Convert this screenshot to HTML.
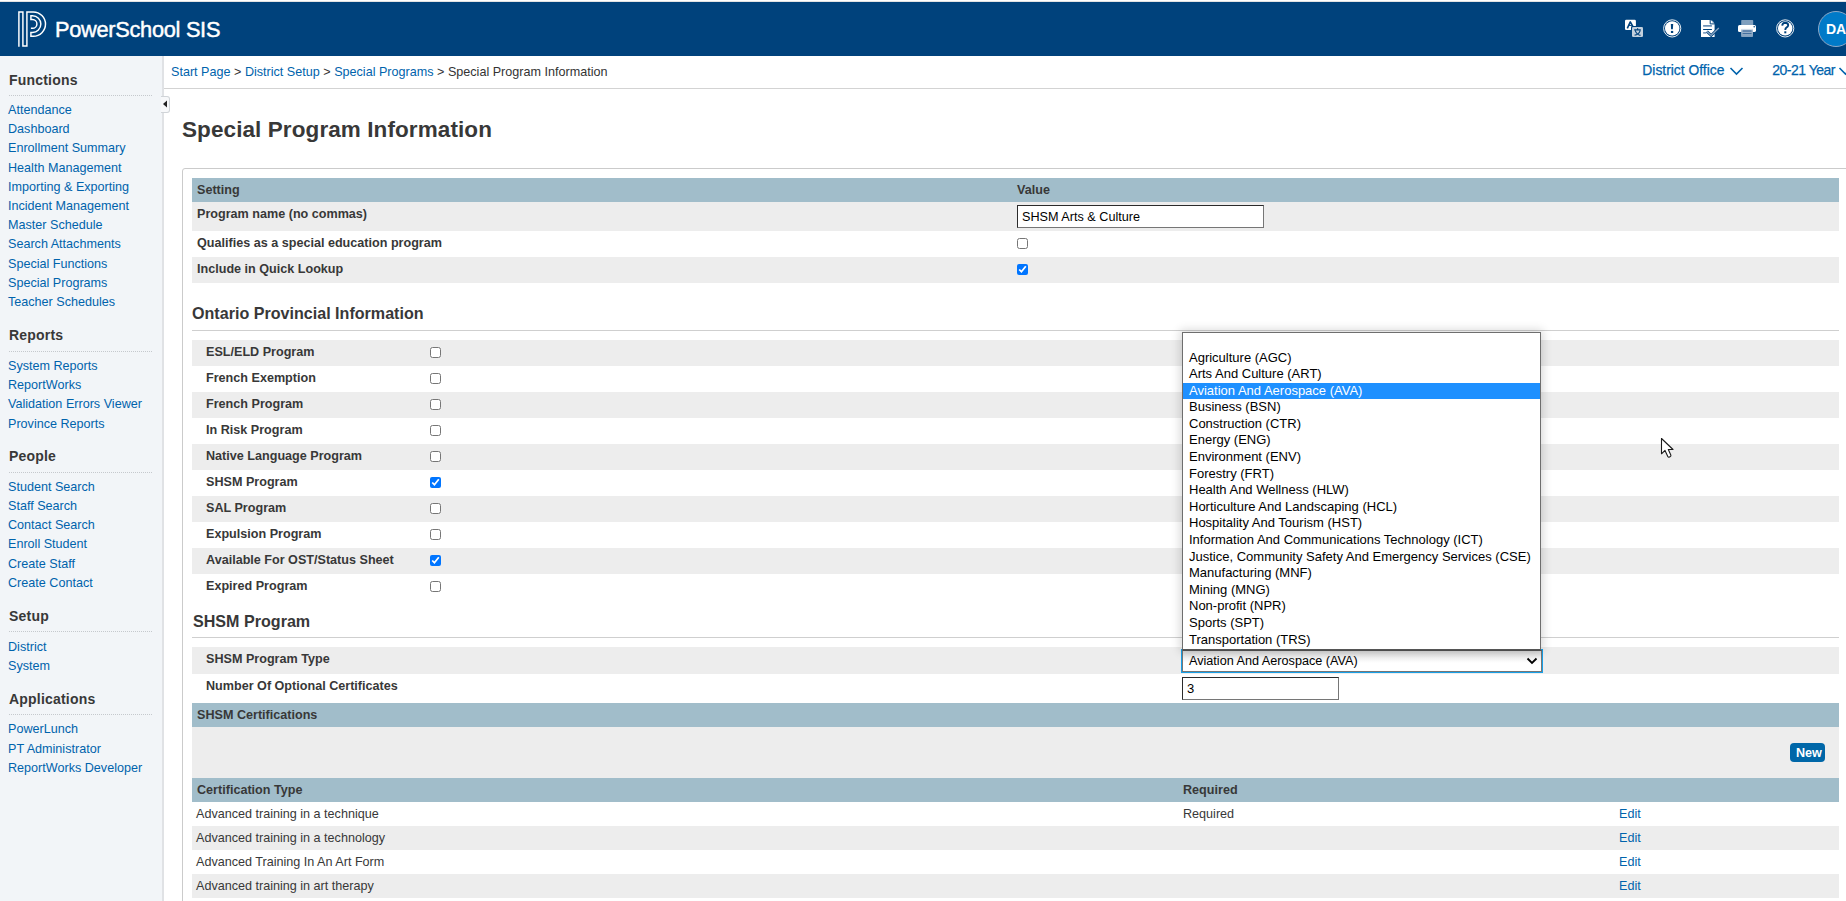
<!DOCTYPE html>
<html><head><meta charset="utf-8">
<style>
*{box-sizing:border-box;margin:0;padding:0}
html,body{width:1846px;height:901px;overflow:hidden;background:#fff;font-family:"Liberation Sans",sans-serif;color:#333}
.a{position:absolute}
.t{position:absolute;white-space:nowrap;line-height:20px}
input[type=checkbox]{position:absolute;width:11px;height:11px;margin:0}
</style></head><body>
<div class="a" style="left:0px;top:0px;width:1846px;height:1px;background:#fff"></div>
<div class="a" style="left:0px;top:1px;width:1846px;height:1px;background:#e2e2e2"></div>
<div class="a" style="left:0px;top:2px;width:1846px;height:54px;background:#00427c"></div>
<div class="t" style="left:55px;top:20px;font-size:21.8px;color:#fff;letter-spacing:-0.3px;-webkit-text-stroke:0.45px #fff">PowerSchool SIS</div>
<div class="a" style="left:0px;top:56px;width:162px;height:845px;background:#f2f5f8"></div>
<div class="a" style="left:162px;top:56px;width:2px;height:845px;background:#e0e2e5"></div>
<div class="t" style="left:9px;top:70px;font-size:14px;font-weight:bold;color:#383838;letter-spacing:0.2px">Functions</div>
<div class="a" style="left:9px;top:95px;width:144px;height:1px;background-image:linear-gradient(to right,#c5c9cd 50%,transparent 50%);background-size:2px 1px"></div>
<div class="t" style="left:8px;top:100px;font-size:12.6px;color:#0063ac;">Attendance</div>
<div class="t" style="left:8px;top:119px;font-size:12.6px;color:#0063ac;">Dashboard</div>
<div class="t" style="left:8px;top:138px;font-size:12.6px;color:#0063ac;">Enrollment Summary</div>
<div class="t" style="left:8px;top:158px;font-size:12.6px;color:#0063ac;">Health Management</div>
<div class="t" style="left:8px;top:177px;font-size:12.6px;color:#0063ac;">Importing &amp; Exporting</div>
<div class="t" style="left:8px;top:196px;font-size:12.6px;color:#0063ac;">Incident Management</div>
<div class="t" style="left:8px;top:215px;font-size:12.6px;color:#0063ac;">Master Schedule</div>
<div class="t" style="left:8px;top:234px;font-size:12.6px;color:#0063ac;">Search Attachments</div>
<div class="t" style="left:8px;top:254px;font-size:12.6px;color:#0063ac;">Special Functions</div>
<div class="t" style="left:8px;top:273px;font-size:12.6px;color:#0063ac;">Special Programs</div>
<div class="t" style="left:8px;top:292px;font-size:12.6px;color:#0063ac;">Teacher Schedules</div>
<div class="t" style="left:9px;top:325px;font-size:14px;font-weight:bold;color:#383838;letter-spacing:0.2px">Reports</div>
<div class="a" style="left:9px;top:351px;width:144px;height:1px;background-image:linear-gradient(to right,#c5c9cd 50%,transparent 50%);background-size:2px 1px"></div>
<div class="t" style="left:8px;top:356px;font-size:12.6px;color:#0063ac;">System Reports</div>
<div class="t" style="left:8px;top:375px;font-size:12.6px;color:#0063ac;">ReportWorks</div>
<div class="t" style="left:8px;top:394px;font-size:12.6px;color:#0063ac;">Validation Errors Viewer</div>
<div class="t" style="left:8px;top:414px;font-size:12.6px;color:#0063ac;">Province Reports</div>
<div class="t" style="left:9px;top:446px;font-size:14px;font-weight:bold;color:#383838;letter-spacing:0.2px">People</div>
<div class="a" style="left:9px;top:472px;width:144px;height:1px;background-image:linear-gradient(to right,#c5c9cd 50%,transparent 50%);background-size:2px 1px"></div>
<div class="t" style="left:8px;top:477px;font-size:12.6px;color:#0063ac;">Student Search</div>
<div class="t" style="left:8px;top:496px;font-size:12.6px;color:#0063ac;">Staff Search</div>
<div class="t" style="left:8px;top:515px;font-size:12.6px;color:#0063ac;">Contact Search</div>
<div class="t" style="left:8px;top:534px;font-size:12.6px;color:#0063ac;">Enroll Student</div>
<div class="t" style="left:8px;top:554px;font-size:12.6px;color:#0063ac;">Create Staff</div>
<div class="t" style="left:8px;top:573px;font-size:12.6px;color:#0063ac;">Create Contact</div>
<div class="t" style="left:9px;top:606px;font-size:14px;font-weight:bold;color:#383838;letter-spacing:0.2px">Setup</div>
<div class="a" style="left:9px;top:631px;width:144px;height:1px;background-image:linear-gradient(to right,#c5c9cd 50%,transparent 50%);background-size:2px 1px"></div>
<div class="t" style="left:8px;top:637px;font-size:12.6px;color:#0063ac;">District</div>
<div class="t" style="left:8px;top:656px;font-size:12.6px;color:#0063ac;">System</div>
<div class="t" style="left:9px;top:689px;font-size:14px;font-weight:bold;color:#383838;letter-spacing:0.2px">Applications</div>
<div class="a" style="left:9px;top:714px;width:144px;height:1px;background-image:linear-gradient(to right,#c5c9cd 50%,transparent 50%);background-size:2px 1px"></div>
<div class="t" style="left:8px;top:719px;font-size:12.6px;color:#0063ac;">PowerLunch</div>
<div class="t" style="left:8px;top:739px;font-size:12.6px;color:#0063ac;">PT Administrator</div>
<div class="t" style="left:8px;top:758px;font-size:12.6px;color:#0063ac;">ReportWorks Developer</div>
<div class="a" style="left:164px;top:56px;width:1682px;height:32px;background:#fff"></div>
<div class="a" style="left:164px;top:88px;width:1682px;height:1px;background:#d3d3d3"></div>
<div class="t" style="left:171px;top:62px;font-size:12.6px"><span style="color:#0063ac">Start Page</span> &gt; <span style="color:#0063ac">District Setup</span> &gt; <span style="color:#0063ac">Special Programs</span> &gt; Special Program Information</div>
<div class="t" style="left:182px;top:120px;font-size:22.5px;font-weight:bold;color:#383838;letter-spacing:0.09px">Special Program Information</div>
<div class="a" style="left:182px;top:168px;width:1700px;height:800px;border:1px solid #cbcbcb;border-radius:3px"></div>
<div class="a" style="left:192px;top:178px;width:1647px;height:24px;background:#a1bdca"></div>
<div class="t" style="left:197px;top:180px;font-size:12.6px;font-weight:bold;color:#383838;">Setting</div>
<div class="t" style="left:1017px;top:180px;font-size:12.6px;font-weight:bold;color:#383838;">Value</div>
<div class="a" style="left:192px;top:202px;width:1647px;height:29px;background:#ededed"></div>
<div class="t" style="left:197px;top:204px;font-size:12.6px;font-weight:bold;color:#383838;">Program name (no commas)</div>
<div class="t" style="left:197px;top:233px;font-size:12.6px;font-weight:bold;color:#383838;">Qualifies as a special education program</div>
<div class="a" style="left:192px;top:257px;width:1647px;height:26px;background:#ededed"></div>
<div class="t" style="left:197px;top:259px;font-size:12.6px;font-weight:bold;color:#383838;">Include in Quick Lookup</div>
<div class="t" style="left:192px;top:303px;font-size:16.1px;font-weight:bold;color:#383838;">Ontario Provincial Information</div>
<div class="a" style="left:192px;top:330px;width:1647px;height:1px;background:#cfcfcf"></div>
<div class="a" style="left:192px;top:340px;width:1647px;height:26px;background:#ededed"></div>
<div class="t" style="left:206px;top:342px;font-size:12.6px;font-weight:bold;color:#383838;">ESL/ELD Program</div>
<input type="checkbox" style="left:430px;top:347px">
<div class="t" style="left:206px;top:368px;font-size:12.6px;font-weight:bold;color:#383838;">French Exemption</div>
<input type="checkbox" style="left:430px;top:373px">
<div class="a" style="left:192px;top:392px;width:1647px;height:26px;background:#ededed"></div>
<div class="t" style="left:206px;top:394px;font-size:12.6px;font-weight:bold;color:#383838;">French Program</div>
<input type="checkbox" style="left:430px;top:399px">
<div class="t" style="left:206px;top:420px;font-size:12.6px;font-weight:bold;color:#383838;">In Risk Program</div>
<input type="checkbox" style="left:430px;top:425px">
<div class="a" style="left:192px;top:444px;width:1647px;height:26px;background:#ededed"></div>
<div class="t" style="left:206px;top:446px;font-size:12.6px;font-weight:bold;color:#383838;">Native Language Program</div>
<input type="checkbox" style="left:430px;top:451px">
<div class="t" style="left:206px;top:472px;font-size:12.6px;font-weight:bold;color:#383838;">SHSM Program</div>
<input type="checkbox" style="left:430px;top:477px" checked>
<div class="a" style="left:192px;top:496px;width:1647px;height:26px;background:#ededed"></div>
<div class="t" style="left:206px;top:498px;font-size:12.6px;font-weight:bold;color:#383838;">SAL Program</div>
<input type="checkbox" style="left:430px;top:503px">
<div class="t" style="left:206px;top:524px;font-size:12.6px;font-weight:bold;color:#383838;">Expulsion Program</div>
<input type="checkbox" style="left:430px;top:529px">
<div class="a" style="left:192px;top:548px;width:1647px;height:26px;background:#ededed"></div>
<div class="t" style="left:206px;top:550px;font-size:12.6px;font-weight:bold;color:#383838;">Available For OST/Status Sheet</div>
<input type="checkbox" style="left:430px;top:555px" checked>
<div class="t" style="left:206px;top:576px;font-size:12.6px;font-weight:bold;color:#383838;">Expired Program</div>
<input type="checkbox" style="left:430px;top:581px">
<div class="t" style="left:193px;top:611px;font-size:16.1px;font-weight:bold;color:#383838;">SHSM Program</div>
<div class="a" style="left:192px;top:637px;width:1647px;height:1px;background:#cfcfcf"></div>
<div class="a" style="left:192px;top:647px;width:1647px;height:27px;background:#ededed"></div>
<div class="t" style="left:206px;top:649px;font-size:12.6px;font-weight:bold;color:#383838;">SHSM Program Type</div>
<div class="t" style="left:206px;top:676px;font-size:12.6px;font-weight:bold;color:#383838;">Number Of Optional Certificates</div>
<div class="a" style="left:192px;top:703px;width:1647px;height:24px;background:#a1bdca"></div>
<div class="t" style="left:197px;top:705px;font-size:12.6px;font-weight:bold;color:#383838;">SHSM Certifications</div>
<div class="a" style="left:192px;top:727px;width:1647px;height:51px;background:#ededed"></div>
<div class="a" style="left:1790px;top:743px;width:35px;height:19px;background:#0067a8;border-radius:4px"></div>
<div class="t" style="left:1796px;top:743px;font-size:12.6px;font-weight:bold;color:#fff;">New</div>
<div class="a" style="left:192px;top:778px;width:1647px;height:24px;background:#a1bdca"></div>
<div class="t" style="left:197px;top:780px;font-size:12.6px;font-weight:bold;color:#383838;">Certification Type</div>
<div class="t" style="left:1183px;top:780px;font-size:12.6px;font-weight:bold;color:#383838;">Required</div>
<div class="t" style="left:196px;top:804px;font-size:12.6px;color:#383838;">Advanced training in a technique</div>
<div class="t" style="left:1183px;top:804px;font-size:12.6px;color:#383838;">Required</div>
<div class="t" style="left:1619px;top:804px;font-size:12.6px;color:#0063ac;">Edit</div>
<div class="a" style="left:192px;top:826px;width:1647px;height:24px;background:#ededed"></div>
<div class="t" style="left:196px;top:828px;font-size:12.6px;color:#383838;">Advanced training in a technology</div>
<div class="t" style="left:1619px;top:828px;font-size:12.6px;color:#0063ac;">Edit</div>
<div class="t" style="left:196px;top:852px;font-size:12.6px;color:#383838;">Advanced Training In An Art Form</div>
<div class="t" style="left:1619px;top:852px;font-size:12.6px;color:#0063ac;">Edit</div>
<div class="a" style="left:192px;top:874px;width:1647px;height:24px;background:#ededed"></div>
<div class="t" style="left:196px;top:876px;font-size:12.6px;color:#383838;">Advanced training in art therapy</div>
<div class="t" style="left:1619px;top:876px;font-size:12.6px;color:#0063ac;">Edit</div>
<div class="a" style="left:1017px;top:205px;width:247px;height:23px;background:#fff;border:1px solid #767676;border-top-color:#2b2b2b;border-left-color:#2b2b2b"></div>
<div class="t" style="left:1022px;top:207px;font-size:12.65px;color:#000;">SHSM Arts &amp; Culture</div>
<input type="checkbox" style="left:1017px;top:238px">
<input type="checkbox" style="left:1017px;top:264px" checked>
<div class="a" style="left:1182px;top:677px;width:157px;height:23px;background:#fff;border:1px solid #767676;border-top-color:#2b2b2b;border-left-color:#2b2b2b"></div>
<div class="t" style="left:1187px;top:679px;font-size:13px;color:#000;">3</div>
<div class="a" style="left:1181px;top:649px;width:362px;height:24px;border:1px solid #18a0e8;background:#fff"></div>
<div class="a" style="left:1182px;top:650px;width:360px;height:22px;border:1px solid #767676;border-top-color:#555;background:linear-gradient(#d8d8d8,#f2f2f2 35%,#fff 60%)"></div>
<div class="t" style="left:1189px;top:651px;font-size:12.65px;color:#000;">Aviation And Aerospace (AVA)</div>
<svg class="a" style="left:1525px;top:655px" width="14" height="12" viewBox="0 0 14 12"><path d="M2.5 3.5 L7 8 L11.5 3.5" fill="none" stroke="#000" stroke-width="1.8"/></svg>
<div class="a" style="left:1182px;top:332px;width:359px;height:318px;background:#fff;border:1px solid #6e6e6e;border-bottom-color:#555;box-shadow:0 0 9px 2px rgba(0,0,0,0.16)"></div>
<div class="t" style="left:1189px;top:348px;font-size:13px;color:#000;">Agriculture (AGC)</div>
<div class="t" style="left:1189px;top:364px;font-size:13px;color:#000;">Arts And Culture (ART)</div>
<div class="a" style="left:1183px;top:383px;width:357px;height:16px;background:#1e90ff"></div>
<div class="t" style="left:1189px;top:381px;font-size:13px;color:#fff;">Aviation And Aerospace (AVA)</div>
<div class="t" style="left:1189px;top:397px;font-size:13px;color:#000;">Business (BSN)</div>
<div class="t" style="left:1189px;top:414px;font-size:13px;color:#000;">Construction (CTR)</div>
<div class="t" style="left:1189px;top:430px;font-size:13px;color:#000;">Energy (ENG)</div>
<div class="t" style="left:1189px;top:447px;font-size:13px;color:#000;">Environment (ENV)</div>
<div class="t" style="left:1189px;top:464px;font-size:13px;color:#000;">Forestry (FRT)</div>
<div class="t" style="left:1189px;top:480px;font-size:13px;color:#000;">Health And Wellness (HLW)</div>
<div class="t" style="left:1189px;top:497px;font-size:13px;color:#000;">Horticulture And Landscaping (HCL)</div>
<div class="t" style="left:1189px;top:513px;font-size:13px;color:#000;">Hospitality And Tourism (HST)</div>
<div class="t" style="left:1189px;top:530px;font-size:13px;color:#000;">Information And Communications Technology (ICT)</div>
<div class="t" style="left:1189px;top:547px;font-size:13px;color:#000;">Justice, Community Safety And Emergency Services (CSE)</div>
<div class="t" style="left:1189px;top:563px;font-size:13px;color:#000;">Manufacturing (MNF)</div>
<div class="t" style="left:1189px;top:580px;font-size:13px;color:#000;">Mining (MNG)</div>
<div class="t" style="left:1189px;top:596px;font-size:13px;color:#000;">Non-profit (NPR)</div>
<div class="t" style="left:1189px;top:613px;font-size:13px;color:#000;">Sports (SPT)</div>
<div class="t" style="left:1189px;top:630px;font-size:13px;color:#000;">Transportation (TRS)</div>
<svg class="a" style="left:0;top:0" width="60" height="60" viewBox="0 0 60 60"><path d="M18.9 46.7 L18.9 11.9 L22.9 11.9 L22.9 45.9 L26.9 45.9 L26.9 11.9 L33.3 11.9 A12.2 12.2 0 0 1 33.3 36.3 L30.9 36.3 L30.9 32.4 L32.5 32.4 A8.35 8.35 0 0 0 32.5 15.7 L30.9 15.7 L30.9 19.5 L32.5 19.5 A4.4 4.4 0 0 1 32.5 28.3 L30.9 28.3" fill="none" stroke="#fff" stroke-width="1.45" stroke-linejoin="miter"/></svg>
<svg class="a" style="left:1620px;top:14px" width="30" height="30" viewBox="0 0 30 30">
<rect x="5" y="5.8" width="10.9" height="10.2" rx="1.3" fill="#fff"/>
<rect x="11" y="12" width="12" height="11" rx="1.3" fill="#00427c"/>
<rect x="12" y="13" width="11" height="10" rx="1.3" fill="#c3d0dd"/>
<path d="M7.3 14.3 L10.3 7.9 L13 12.6" fill="none" stroke="#00427c" stroke-width="1.6" stroke-linejoin="round"/><path d="M8.9 11.4 H11.9" stroke="#00427c" stroke-width="1"/>
<path d="M14.2 15.8 H20.8 M17.6 14.2 V15.8 M15.2 16.6 Q16.8 20.6 20.5 21.4 M20.2 16.6 Q18.6 20.8 14.6 21.2" fill="none" stroke="#00427c" stroke-width="1.2"/>
</svg>
<svg class="a" style="left:1662px;top:18px" width="21" height="21" viewBox="0 0 21 21">
<circle cx="10.2" cy="10.4" r="8.6" fill="none" stroke="#fff" stroke-width="0.9"/>
<circle cx="10.2" cy="10.4" r="7.2" fill="#fff"/>
<path d="M8.8 6 H11.2 L10.9 11.2 H9.1 Z" fill="#00427c"/>
<rect x="8.9" y="12.9" width="2.3" height="2.1" fill="#00427c"/>
</svg>
<svg class="a" style="left:1698px;top:17px" width="24" height="24" viewBox="0 0 24 24">
<path d="M3 3 H12.9 L16.6 6.7 V20 H3 Z" fill="#fff"/>
<path d="M12.2 2.6 V6.9 H17" fill="none" stroke="#00427c" stroke-width="1"/>
<path d="M14 3.4 L16.2 5.6 H14 Z" fill="#9fb6cf"/>
<rect x="5.1" y="8.2" width="8.8" height="1.4" fill="#4a77a6"/>
<rect x="5.1" y="12" width="8.8" height="1" fill="#00427c"/>
<rect x="5.1" y="15.3" width="3" height="1.2" fill="#4a77a6"/>
<path d="M8.9 14.4 L13.2 18.4 L20.8 11" fill="none" stroke="#00427c" stroke-width="2.7"/>
<path d="M8.9 14.4 L13.2 18.4 L20.8 11" fill="none" stroke="#8aa6c4" stroke-width="1.3"/>
</svg>
<svg class="a" style="left:1735px;top:17px" width="24" height="24" viewBox="0 0 24 24">
<defs><linearGradient id="pg" x1="0" y1="0" x2="0" y2="1"><stop offset="0" stop-color="#fff"/><stop offset="0.28" stop-color="#9db4cc"/><stop offset="1" stop-color="#7f9fbe"/></linearGradient></defs>
<rect x="6.2" y="3" width="12" height="6" rx="0.8" fill="#7f9fbe"/>
<rect x="3" y="8" width="18" height="7" rx="1.6" fill="#fff"/>
<rect x="6.1" y="11.3" width="11.9" height="8.8" rx="0.8" fill="url(#pg)"/>
<rect x="7.6" y="13.4" width="9" height="1.2" fill="#3a689a"/>
<rect x="7.6" y="16.1" width="9" height="0.9" fill="#3a689a"/>
<circle cx="19.2" cy="9.7" r="0.75" fill="#00427c"/>
</svg>
<svg class="a" style="left:1775px;top:18px" width="21" height="21" viewBox="0 0 21 21">
<circle cx="10.2" cy="10.4" r="8.6" fill="none" stroke="#fff" stroke-width="0.9"/>
<circle cx="10.2" cy="10.4" r="7.2" fill="#fff"/>
<path d="M7.2 7.6 Q7.4 4.7 10.3 4.7 Q13.2 4.8 13.2 7.3 Q13.2 8.8 11.4 9.7 Q10.3 10.3 10.3 12" fill="none" stroke="#00427c" stroke-width="1.9"/>
<rect x="9.3" y="13.3" width="2" height="2" fill="#00427c"/>
</svg>
<div class="a" style="left:1818px;top:11px;width:36px;height:36px;border-radius:50%;background:#007ac8;border:1px solid #8fa9c7"></div>
<div class="t" style="left:1826px;top:19px;font-size:14px;font-weight:bold;color:#fff;">DA</div>
<div class="t" style="left:1642.3px;top:60px;font-size:13.86px;color:#0063ac;-webkit-text-stroke:0.25px #0063ac">District Office</div>
<svg class="a" style="left:1728px;top:64px" width="18" height="14" viewBox="0 0 18 14"><path d="M2.5 4 L8.5 10 L14.5 4" fill="none" stroke="#0063ac" stroke-width="1.6"/></svg>
<div class="t" style="left:1772.2px;top:60px;font-size:14px;color:#0063ac;letter-spacing:-0.5px;-webkit-text-stroke:0.25px #0063ac">20-21 Year</div>
<svg class="a" style="left:1837px;top:64px" width="18" height="14" viewBox="0 0 18 14"><path d="M2.5 4 L8.5 10 L14.5 4" fill="none" stroke="#0063ac" stroke-width="1.6"/></svg>
<div class="a" style="left:161px;top:96px;width:9px;height:17px;background:#f7f8fa;border:1px solid #d0d4d8;border-left:none;border-radius:0 3px 3px 0"></div>
<svg class="a" style="left:161px;top:98px" width="8" height="12" viewBox="0 0 8 12"><path d="M2 6 L6 2.5 V9.5 Z" fill="#222"/></svg>
<svg class="a" style="left:1660px;top:437px" width="16" height="22" viewBox="0 0 16 22"><path d="M1.5 1.5 V16.8 L5 13.4 L7.8 19.4 Q8.4 20.5 9.4 20 L10.4 19.5 Q11.2 19 10.8 18 L8.3 12.5 H13 Z" fill="#fff" stroke="#1a1a1a" stroke-width="1.1" stroke-linejoin="round"/></svg>
</body></html>
